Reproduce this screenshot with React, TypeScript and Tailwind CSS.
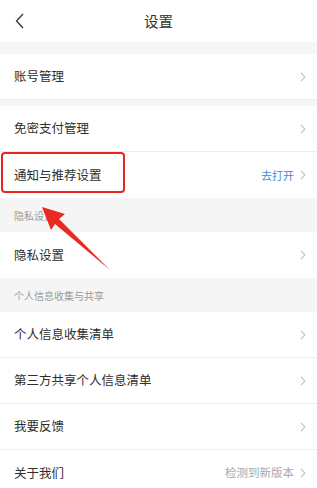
import React from "react";

const Chevron = () => (
  <svg width="6" height="10" viewBox="0 0 6 10" className="ml-[6px]">
    <path d="M1 1 L5 5 L1 9" fill="none" stroke="#c4c4c4" strokeWidth="1.1" />
  </svg>
);

type RowProps = {
  label: string;
  extra?: string;
  extraClass?: string;
  last?: boolean;
  children?: React.ReactNode;
};

const Row = ({ label, extra, extraClass, last, children }: RowProps) => (
  <div
    className={`relative flex items-center justify-between h-[46px] pl-[14px] pr-[11px] bg-white ${last ? "" : "border-b border-[#eeeeee]"}`}
  >
    <span className="text-[12.5px] text-[#2e2e2e]">{label}</span>
    <div className="flex items-center">
      {extra && <span className={extraClass}>{extra}</span>}
      <Chevron />
    </div>
    {children}
  </div>
);

const SectionTitle = ({ title }: { title: string }) => (
  <div className="h-[34px] flex items-end pb-[9px] pl-[14px] bg-[#f5f5f5]">
    <span className="text-[10px] text-[#9a9a9a]">{title}</span>
  </div>
);

export default function App() {
  return (
    <div
      className="relative w-[317px] h-[488px] overflow-hidden bg-[#f5f5f5]"
      style={{ fontFamily: '"Noto Sans CJK SC", "Noto Sans", sans-serif' }}
    >
      {/* header */}
      <div className="relative h-[42px] flex items-center justify-center bg-white">
        <svg
          width="10"
          height="16"
          viewBox="0 0 10 16"
          className="absolute left-[15px] top-[13px]"
        >
          <path d="M8 1 L1.5 8 L8 15" fill="none" stroke="#333333" strokeWidth="1.3" />
        </svg>
        <span className="text-[14.5px] text-[#333333]">设置</span>
      </div>

      <div className="h-[12px]" />

      <Row label="账号管理" />

      <div className="h-[6px]" />

      <Row label="免密支付管理" />
      <Row
        label="通知与推荐设置"
        extra="去打开"
        extraClass="text-[11px] text-[#3a8ee0]"
        last
      >
        <div className="absolute left-[1px] top-0 w-[124px] h-[41px] border-[2.5px] border-[#e8261f] rounded-[4px]" />
      </Row>

      <SectionTitle title="隐私设置" />
      <Row label="隐私设置" last />

      <SectionTitle title="个人信息收集与共享" />
      <Row label="个人信息收集清单" />
      <Row label="第三方共享个人信息清单" />
      <Row label="我要反馈" />
      <Row
        label="关于我们"
        extra="检测到新版本"
        extraClass="text-[11.5px] text-[#a8a8a8]"
        last
      />

      {/* annotation arrow */}
      <svg
        width="317"
        height="488"
        viewBox="0 0 317 488"
        className="absolute left-0 top-0 pointer-events-none"
      >
        <polygon
          points="42,207 65,214 59,219 110,270 55,224 51,230"
          fill="#ea2a22"
        />
      </svg>
    </div>
  );
}
